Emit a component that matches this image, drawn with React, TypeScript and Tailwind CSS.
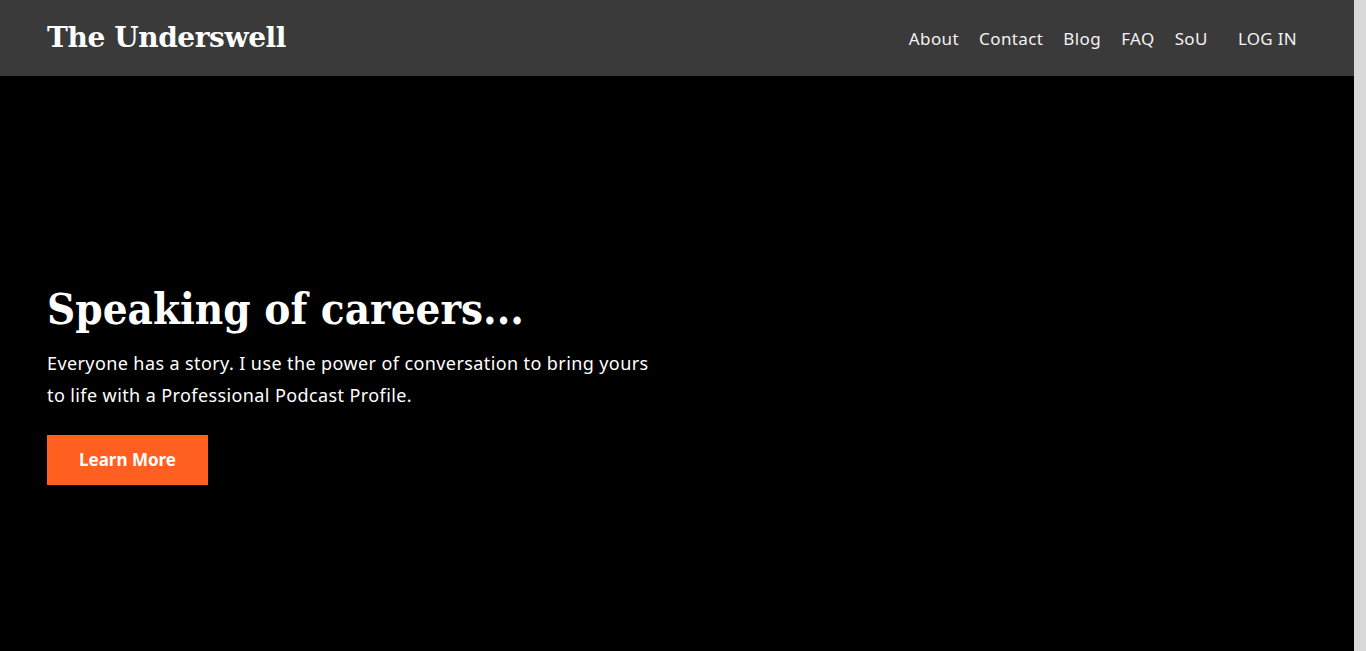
const sans = "font-['Noto_Sans','Lato',sans-serif]";
const serif = "font-['DejaVu_Serif','Liberation_Serif',serif]";

const NavLink = ({ children }: { children: React.ReactNode }) => (
  <a className="text-[17px] tracking-[0.4px] text-[#f2f2f2] leading-none">{children}</a>
);

export default function App() {
  return (
    <div className="flex h-[651px] w-full overflow-hidden">
      <div className="flex flex-1 flex-col bg-black">
        <header className="flex h-[76px] items-center justify-between bg-[#3a3a3a] pl-[47px] pr-[57px]">
          <p className={`${serif} text-[28px] font-bold text-white tracking-[-0.4px]`}>The Underswell</p>
          <nav className={`${sans} flex items-center`}>
            <div className="flex gap-5">
              <NavLink>About</NavLink>
              <NavLink>Contact</NavLink>
              <NavLink>Blog</NavLink>
              <NavLink>FAQ</NavLink>
              <NavLink>SoU</NavLink>
            </div>
            <a className="ml-[30px] text-[17px] tracking-[0.3px] text-[#f2f2f2] leading-none">LOG IN</a>
          </nav>
        </header>

        <main className="flex flex-1 flex-col justify-center px-[47px] pt-[40px]">
          <h1 className={`${serif} text-[43.5px] font-bold leading-tight text-white [font-stretch:condensed]`}>
            Speaking of careers...
          </h1>
          <p className={`${sans} mt-[10px] max-w-[612px] text-[18px] leading-[32px] tracking-[0.4px] text-white`}>
            Everyone has a story. I use the power of conversation to bring yours to life with a Professional
            Podcast Profile.
          </p>
          <a className={`${sans} mt-[24px] flex h-[50px] w-[161px] items-center justify-center bg-[#ff5f1f] text-[17px] font-bold text-white`}>
            Learn More
          </a>
        </main>
      </div>
      <div className="w-3 bg-[#d9d9d9]" />
    </div>
  );
}
